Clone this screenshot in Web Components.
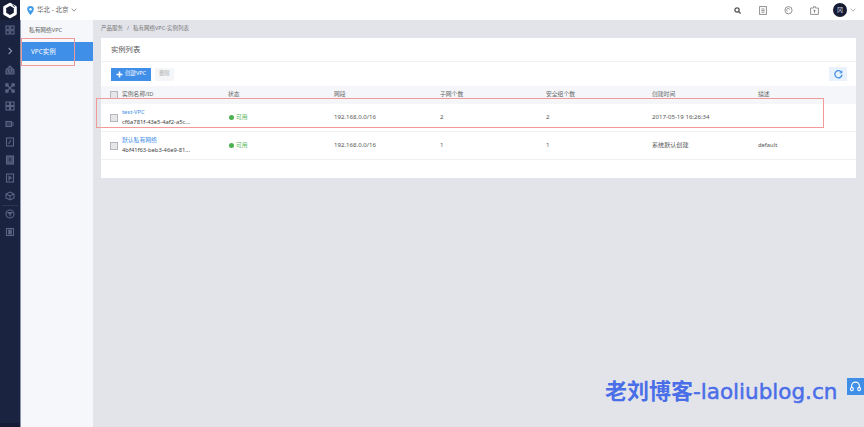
<!DOCTYPE html>
<html>
<head>
<meta charset="utf-8">
<style>
  html, body { margin: 0; height: 100%; overflow: hidden; }
  body { font-family: "Noto Sans", "Noto Sans CJK SC", sans-serif; background: #e3e4ea; }
</style>
</head>
<body>
<vpc-app>
  <side-rail slot="rail"></side-rail>
  <top-bar slot="top"></top-bar>
  <sub-nav slot="nav"></sub-nav>
  <bread-crumbs slot="main"></bread-crumbs>
  <instance-card slot="main">
    <instance-row name="test-VPC" vid="cf6a781f-43e5-4af2-a5c..." cidr="192.168.0.0/16" subnets="2" groups="2" created="2017-05-19 16:26:34"></instance-row>
    <instance-row name="默认私有网络" vid="4bf41f63-beb3-46e9-81..." cidr="192.168.0.0/16" subnets="1" groups="1" created="系统默认创建" desc="default"></instance-row>
  </instance-card>
</vpc-app>

<script>
const FONT = '"Noto Sans", "Noto Sans CJK SC", sans-serif';

class VpcApp extends HTMLElement {
  constructor() {
    super();
    this.attachShadow({ mode: 'open' }).innerHTML = `
      <style>
        :host { display: grid; grid-template-columns: 20px 1fr; width: 864px; height: 427px; overflow: hidden; position: relative; }
        .right { display: grid; grid-template-rows: 20px 1fr; min-width: 0; }
        .body { display: grid; grid-template-columns: 73px 1fr; min-height: 0; }
        .main { padding: 0 8px 0 8px; min-width: 0; }
        .mark { position: absolute; border: 1px solid #f29a9a; box-sizing: border-box; pointer-events: none; }
        .m1 { left: 21px; top: 38px; width: 54px; height: 28px; }
        .m2 { left: 96px; top: 98px; width: 728px; height: 30px; }
        .brand { position: absolute; left: 605px; top: 376px; font: 400 21.5px/26px "DejaVu Sans", "Noto Sans CJK SC", sans-serif; color: #4a6ee8; white-space: nowrap; -webkit-text-stroke: .5px #4a6ee8; }
        .brand b { font: 700 22px/26px "Noto Sans CJK SC", sans-serif; -webkit-text-stroke: 0; }
        .help { position: absolute; left: 847px; top: 378px; width: 17px; height: 17px; background: #3f8ee8; display: flex; align-items: center; justify-content: center; }
      </style>
      <slot name="rail"></slot>
      <div class="right">
        <slot name="top"></slot>
        <div class="body">
          <slot name="nav"></slot>
          <div class="main"><slot name="main"></slot></div>
        </div>
      </div>
      <div class="mark m1"></div>
      <div class="mark m2"></div>
      <div class="brand"><b>老刘博客</b>-laoliublog.cn</div>
      <div class="help">
        <svg width="13" height="13" viewBox="0 0 13 13" fill="none" stroke="#fff" stroke-width="1.1">
          <path d="M2.6 7.5V6a3.9 3.9 0 0 1 7.8 0v1.5"/>
          <rect x="1.6" y="7.4" width="2.6" height="3.4" rx="1.2"/>
          <rect x="8.8" y="7.4" width="2.6" height="3.4" rx="1.2"/>
        </svg>
      </div>`;
  }
}

class SideRail extends HTMLElement {
  constructor() {
    super();
    const ic = (d) => `<svg width="10" height="10" viewBox="0 0 10 10" fill="none" stroke="#5b6483" stroke-width="1.1">${d}</svg>`;
    const icons = [
      '<rect x="1" y="1" width="3.3" height="3.3"/><rect x="5.7" y="1" width="3.3" height="3.3"/><rect x="1" y="5.7" width="3.3" height="3.3"/><rect x="5.7" y="5.7" width="3.3" height="3.3"/>',
      'ARROW',
      '<path d="M1 5 5 1l4 4v4H1z" fill="#5b6483" fill-opacity=".5"/><rect x="3.5" y="5" width="3" height="2" fill="#1a2340"/>',
      '<path d="M2.5 2.5l5 5M7.5 2.5l-5 5"/><rect x=".8" y=".8" width="2.2" height="2.2" fill="#5b6483"/><rect x="7" y=".8" width="2.2" height="2.2" fill="#5b6483"/><rect x=".8" y="7" width="2.2" height="2.2" fill="#5b6483"/><rect x="7" y="7" width="2.2" height="2.2" fill="#5b6483"/>',
      '<rect x="1" y="1" width="3.5" height="3.5"/><rect x="5.5" y="1" width="3.5" height="3.5"/><rect x="1" y="5.5" width="3.5" height="3.5"/><rect x="5.5" y="5.5" width="3.5" height="3.5"/>',
      '<rect x="1" y="2.5" width="5.5" height="5" fill="#5b6483" fill-opacity=".4"/><path d="M7 4h2M7 6h2"/>',
      '<rect x="1.5" y="1" width="7" height="8"/><path d="M3.5 7 6 3"/>',
      '<rect x="1.5" y="1" width="7" height="8" fill="#5b6483" fill-opacity=".7"/><path d="M5 3v3" stroke="#1a2340"/>',
      '<rect x="1.5" y="1" width="7" height="8"/><path d="M4 3.2 6.5 5 4 6.8z"/>',
      '<path d="M5 1 9 3v4L5 9 1 7V3z"/><path d="M1 3l4 2 4-2M5 5v4"/>',
      'LINE',
      '<circle cx="5" cy="5" r="4"/><path d="M3 3.5h4L5 5.5zM5 5.5V7.5"/>',
      '<rect x="1.5" y="1.5" width="7" height="7"/><rect x="3.8" y="3" width="2.4" height="4" fill="#5b6483"/>'
    ];
    const cells = icons.map(d => {
      if (d === 'LINE') return '<div class="sep"></div>';
      if (d === 'ARROW') return '<div class="cell arrow"><svg width="8" height="8" viewBox="0 0 8 8" fill="none" stroke="#8d94ab" stroke-width="1.1"><path d="M2.7 1 5.6 4 2.7 7"/></svg></div>';
      return `<div class="cell">${ic(d)}</div>`;
    }).join('');
    this.attachShadow({ mode: 'open' }).innerHTML = `
      <style>
        :host { display: flex; flex-direction: column; background: #1a2340; width: 20px; height: 427px; box-sizing: border-box; position: relative; }
        .logo { height: 20px; display: flex; align-items: center; justify-content: center; margin-bottom: 1px; background: #151c33; }
        .cell { height: 18px; display: flex; align-items: center; justify-content: center; }
        .arrow { height: 22px; margin-top: 1px; margin-bottom: -1px; }
        .sep { height: 1px; background: #2c3553; margin: -0.5px 2px -0.5px; }
        .foot { margin-top: auto; height: 4px; background: #151c33; }
      </style>
      <div class="logo">
        <svg width="16" height="17" viewBox="0 0 16 17" fill="none">
          <path d="M8 2.2 13.3 5.2V11.6L8 14.8 2.7 11.6V5.2Z" stroke="#fff" stroke-width="3" stroke-linejoin="round"/>
          <path d="M10.4 2.6 12.6 4.8" stroke="#151c33" stroke-width="1"/>
        </svg>
      </div>
      ${cells}
      <div class="foot"></div>`;
  }
}

class TopBar extends HTMLElement {
  constructor() {
    super();
    this.attachShadow({ mode: 'open' }).innerHTML = `
      <style>
        :host { display: flex; align-items: center; height: 20px; background: #fff; font: 6.5px/20px ${FONT}; color: #666; padding-left: 7px; padding-right: 8px; box-sizing: border-box; }
        .region { display: flex; align-items: center; gap: 3px; }
        .tools { margin-left: auto; display: flex; align-items: center; }
        .tools svg { display: block; }
        .t1 { margin-right: 18px; } .t2 { margin-right: 17px; } .t3 { margin-right: 17px; } .t4 { margin-right: 14px; }
        .avatar { width: 14px; height: 14px; border-radius: 50%; background: #151c33; color: #d8dbe6; font-size: 6px; line-height: 14px; text-align: center; }
        .caret { margin-left: 3px; }
      </style>
      <div class="region">
        <svg width="7" height="9" viewBox="0 0 7 9"><path d="M3.5 0A3.3 3.3 0 0 0 .2 3.3C.2 5.6 3.5 9 3.5 9s3.3-3.4 3.3-5.7A3.3 3.3 0 0 0 3.5 0Z" fill="#3f9bea"/><circle cx="3.5" cy="3.3" r="1.2" fill="#fff"/></svg>
        <span>华北 - 北京</span>
        <svg width="6" height="4" viewBox="0 0 6 4" fill="none" stroke="#888" stroke-width=".9"><path d="M.7.7 3 3.2 5.3.7"/></svg>
      </div>
      <div class="tools">
        <svg class="t1" width="7" height="7" viewBox="0 0 7 7" fill="none" stroke="#555" stroke-width="1.3"><circle cx="3" cy="3" r="2.1"/><path d="M4.6 4.6 6.6 6.6"/></svg>
        <svg class="t2" width="8" height="9" viewBox="0 0 8 9" fill="none" stroke="#888" stroke-width=".9"><rect x=".6" y=".6" width="6.8" height="7.8"/><path d="M2.4 3h3.2M2.4 4.6h3.2M2.4 6.2h3.2"/></svg>
        <svg class="t3" width="9" height="9" viewBox="0 0 9 9" fill="none" stroke="#888" stroke-width=".9"><circle cx="4.5" cy="4.2" r="3.6"/><path d="M3.4 5.4A1.6 1.6 0 1 1 5.8 3.6M2.5 8l1.5-.8"/></svg>
        <svg class="t4" width="9" height="9" viewBox="0 0 9 9" fill="none" stroke="#888" stroke-width=".9"><path d="M.6 2h3V.7h1.8V2h3v6.4H.6Z"/><path d="M4.5 3.8v3M3.4 4.6h2.2"/></svg>
        <div class="avatar">冈</div>
        <svg class="caret" width="6" height="4" viewBox="0 0 6 4" fill="none" stroke="#aaa" stroke-width=".9"><path d="M.7.7 3 3.2 5.3.7"/></svg>
      </div>`;
  }
}

class SubNav extends HTMLElement {
  constructor() {
    super();
    this.attachShadow({ mode: 'open' }).innerHTML = `
      <style>
        :host { display: block; background: #f5f7fb; font: 5.7px/1 ${FONT}; border-left: 1px solid #8d93a8; box-sizing: border-box; }
        .title { height: 22px; padding: 0 0 0 8px; color: #666; line-height: 21px; }
        .active { height: 19px; line-height: 19px; background: #3f8ee8; color: #fff; padding-left: 10px; font-size: 6.4px; }
      </style>
      <div class="title">私有网络VPC</div>
      <div class="active">VPC实例</div>`;
  }
}

class BreadCrumbs extends HTMLElement {
  constructor() {
    super();
    this.attachShadow({ mode: 'open' }).innerHTML = `
      <style>
        :host { display: flex; gap: 4px; height: 18px; align-items: center; font: 5.5px/1 ${FONT}; color: #777; }
      </style>
      <span>产品服务</span><span>/</span><span>私有网络VPC-实例列表</span>`;
  }
}

const COLS = '21px 106px 106px 106px 106px 106px 106px 1fr';

class InstanceCard extends HTMLElement {
  constructor() {
    super();
    this.attachShadow({ mode: 'open' }).innerHTML = `
      <style>
        :host { display: block; background: #fff; height: 140px; font: 5.8px/1 ${FONT}; color: #555; }
        .head { height: 24px; border-bottom: 1px solid #f1f2f5; box-sizing: border-box; padding-left: 10px; line-height: 23px; font-size: 7.3px; color: #555; }
        .bar { display: flex; align-items: center; height: 24px; padding: 0 9px 0 10px; box-sizing: border-box; gap: 4px; }
        .btn { height: 13px; display: flex; align-items: center; justify-content: center; box-sizing: border-box; }
        .new { width: 40px; background: #3f8ee8; color: #fff; gap: 2px; font-size: 5.5px; }
        .del { width: 19px; background: #f5f6f8; color: #aaa; font-size: 5.2px; }
        .refresh { margin-left: auto; width: 18px; height: 14px; background: #eaf3fd; display: flex; align-items: center; justify-content: center; }
        .cols { display: grid; grid-template-columns: ${COLS}; height: 18px; background: #f5f6fa; align-items: center; color: #666; }
        .cols span { white-space: nowrap; }
        .box { width: 6px; height: 6px; background: #e6e6ea; border: 1px solid #b5b7bd; margin-left: 9px; }
      </style>
      <div class="head">实例列表</div>
      <div class="bar">
        <div class="btn new"><svg width="7" height="7" viewBox="0 0 7 7" stroke="#fff" stroke-width="1.6"><path d="M3.5.5v6M.5 3.5h6"/></svg>创建VPC</div>
        <div class="btn del">删除</div>
        <div class="refresh"><svg width="9" height="9" viewBox="0 0 9 9" fill="none" stroke="#3f8ee8" stroke-width="1.2"><path d="M7.6 2.6A3.6 3.6 0 1 0 8 4.6"/><path d="M7.9.7V2.9H5.7" stroke-width=".9"/></svg></div>
      </div>
      <div class="cols">
        <div class="box"></div>
        <span>实例名称/ID</span><span>状态</span><span>网段</span><span>子网个数</span><span>安全组个数</span><span>创建时间</span><span>描述</span>
      </div>
      <slot></slot>`;
  }
}

class InstanceRow extends HTMLElement {
  constructor() {
    super();
    const a = (n) => this.getAttribute(n) || '';
    this.attachShadow({ mode: 'open' }).innerHTML = `
      <style>
        :host { display: grid; grid-template-columns: ${COLS}; height: 28px; align-items: center; border-bottom: 1px solid #f1f2f5; box-sizing: border-box; font: 6.1px/1 ${FONT}; color: #555; }
        .box { width: 6px; height: 6px; background: #e6e6ea; border: 1px solid #b5b7bd; margin-left: 9px; }
        .name { display: flex; flex-direction: column; gap: 4px; white-space: nowrap; font-size: 5.8px; }
        .name b { font-weight: 400; color: #3f8ee8; }
        .name i { font-style: normal; color: #444; }
        .st { display: flex; align-items: center; gap: 2px; color: #5cb860; font-size: 5.8px; }
        .st u { width: 5px; height: 5px; border-radius: 50%; background: #4caf50; margin-left: 1px; }
        .cjk { font-size: 5.8px; }
      </style>
      <div class="box"></div>
      <div class="name"><b>${a('name')}</b><i>${a('vid')}</i></div>
      <div class="st"><u></u>可用</div>
      <div>${a('cidr')}</div>
      <div>${a('subnets')}</div>
      <div>${a('groups')}</div>
      <div>${a('created')}</div>
      <div class="cjk">${a('desc')}</div>`;
  }
}

customElements.define('vpc-app', VpcApp);
customElements.define('side-rail', SideRail);
customElements.define('top-bar', TopBar);
customElements.define('sub-nav', SubNav);
customElements.define('bread-crumbs', BreadCrumbs);
customElements.define('instance-card', InstanceCard);
customElements.define('instance-row', InstanceRow);
</script>
</body>
</html>
